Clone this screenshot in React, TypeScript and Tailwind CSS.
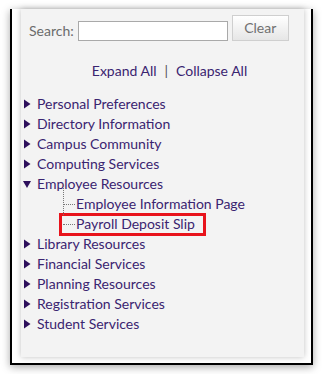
import React from "react";

const items: { label: string; open?: boolean; children?: string[] }[] = [
  { label: "Personal Preferences" },
  { label: "Directory Information" },
  { label: "Campus Community" },
  { label: "Computing Services" },
  { label: "Employee Resources", open: true, children: ["Employee Information Page", "Payroll Deposit Slip"] },
  { label: "Library Resources" },
  { label: "Financial Services" },
  { label: "Planning Resources" },
  { label: "Registration Services" },
  { label: "Student Services" },
];

function Tri({ open }: { open?: boolean }) {
  return (
    <svg width="8" height="10" viewBox="0 0 8 10" className="shrink-0">
      {open ? (
        <polygon points="0,2 8,2 4,9" fill="#2d0f5c" />
      ) : (
        <polygon points="1,0.5 7.5,5 1,9.5" fill="#2d0f5c" />
      )}
    </svg>
  );
}

export default function App() {
  return (
    <div
      className="w-[322px] h-[374px] bg-white overflow-hidden pt-[9px]"
      style={{ fontFamily: "Lato, 'Open Sans', sans-serif" }}
    >
      <div className="ml-[10px] w-[303px] h-[356px] border-l-2 border-r-2 border-b-2 border-black bg-white shadow-[0_2px_8px_rgba(0,0,0,0.35)] pl-[9px] pr-[7px]">
        <div className="w-[283px] h-[348px] bg-[#f3f3f3] shadow-[0_0_6px_rgba(0,0,0,0.25)]">
          <div className="flex items-end pl-[8px] pt-[6px] h-[32px]">
            <span className="text-[14px] text-[#6b6b6b] leading-[20px] mr-[4px]">Search:</span>
            <div className="w-[150px] h-[20px] bg-white border border-[#a9a9a9]" />
            <div className="ml-[4px] w-[57px] h-[26px] border border-[#cfcfcf] bg-gradient-to-b from-white to-[#e6e6e6] flex items-center justify-center text-[14px] text-[#707070] pb-[2px]">
              Clear
            </div>
          </div>
          <div className="h-[53px] flex items-center justify-center pl-[14px] pt-[6px] text-[14px] text-[#3a2470]">
            <span>Expand All</span>
            <span className="mx-[8px] text-[#555]">|</span>
            <span>Collapse All</span>
          </div>
          <div className="pl-[2px] text-[14px] text-[#3a2470]">
            {items.map((it) => (
              <div key={it.label}>
                <div className="h-[20px] flex items-center">
                  <Tri open={it.open} />
                  <span className="ml-[6px] leading-[20px]">{it.label}</span>
                </div>
                {it.children && (
                  <div className="ml-[40px] relative">
                    {it.children.map((c, i) => (
                      <div key={c} className="h-[20px] flex items-center relative">
                        <div className="w-[12px] border-t border-dotted border-[#777]" />
                        <span className="ml-px leading-[20px]">{c}</span>
                        {i === 1 && (
                          <div className="absolute left-[-4px] top-[-1px] w-[147px] h-[23px] border-[3px] border-[#e8131b]" />
                        )}
                      </div>
                    ))}
                    <div className="absolute left-0 top-[-10px] h-[31px] border-l border-dotted border-[#777]" />
                  </div>
                )}
              </div>
            ))}
          </div>
        </div>
      </div>
    </div>
  );
}
